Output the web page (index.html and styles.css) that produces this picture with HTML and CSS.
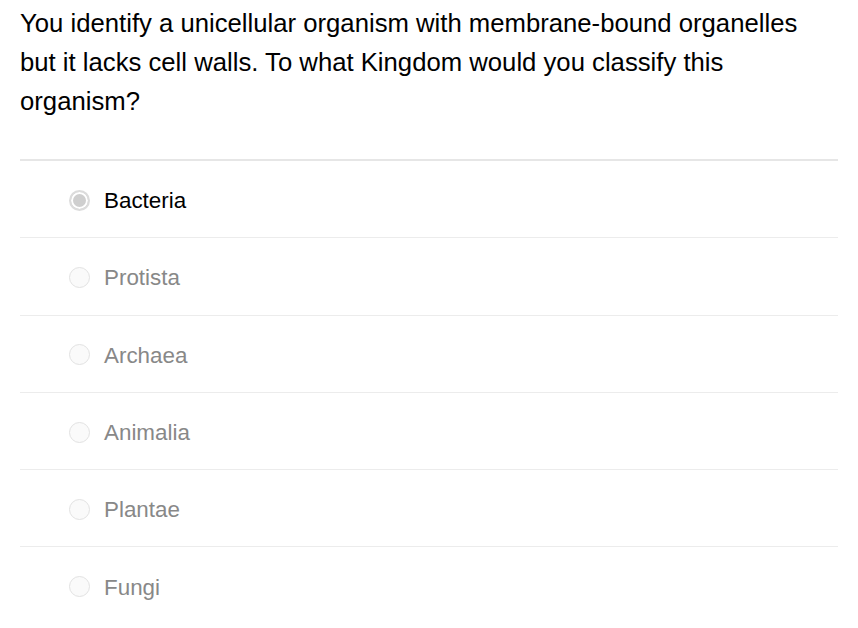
FILE: index.html
```html
<!DOCTYPE html>
<html>
<head>
<meta charset="utf-8">
<link rel="stylesheet" href="styles.css">
</head>
<body>
<div class="quiz">
  <p class="question">You identify a unicellular organism with membrane-bound organelles but it lacks cell walls. To what Kingdom would you classify this organism?</p>
  <ul class="options">
    <li class="option selected"><span class="radio"></span><span class="label">Bacteria</span></li>
    <li class="option"><span class="radio"></span><span class="label">Protista</span></li>
    <li class="option"><span class="radio"></span><span class="label">Archaea</span></li>
    <li class="option"><span class="radio"></span><span class="label">Animalia</span></li>
    <li class="option"><span class="radio"></span><span class="label">Plantae</span></li>
    <li class="option"><span class="radio"></span><span class="label">Fungi</span></li>
  </ul>
</div>
</body>
</html>
```
FILE: styles.css
```css
html, body {
  margin: 0;
  padding: 0;
  background: #ffffff;
}
.quiz {
  padding: 4px 20px 0 20px;
  font-family: "Liberation Sans", Arial, sans-serif;
}
.question {
  margin: 0;
  font-size: 25.7px;
  line-height: 39px;
  color: #000;
  width: 805px;
}
.options {
  list-style: none;
  margin: 38px 0 0 0;
  padding: 0;
  border-top: 2px solid #e6e6e6;
}
.option {
  display: flex;
  align-items: center;
  height: 74.3px;
  padding: 2px 0 0 49px;
  border-bottom: 1px solid #ececec;
}
.option:last-child {
  border-bottom: none;
}
.radio {
  width: 19px;
  height: 19px;
  border-radius: 50%;
  border: 1px solid #e2e2e2;
  background: #fafafa;
  box-sizing: content-box;
  flex: none;
}
.selected .radio {
  width: 17px;
  height: 17px;
  border: 2px solid #dcdcdc;
  background: #cfcfcf;
  box-shadow: inset 0 0 0 2px #fff;
}
.label {
  margin-left: 14px;
  padding-top: 2px;
  font-size: 22.4px;
  color: #888888;
}
.selected .label {
  color: #000;
}
```
